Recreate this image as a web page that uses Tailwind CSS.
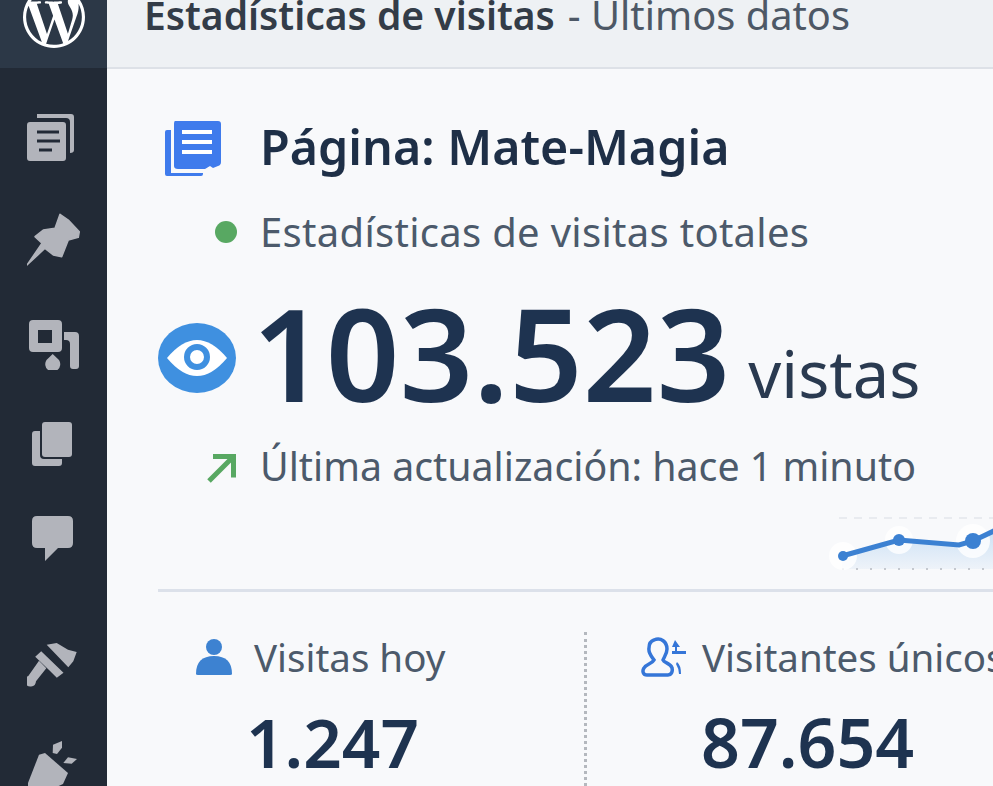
<!DOCTYPE html>
<html lang="es">
<head>
<meta charset="utf-8">
<script src="https://cdn.jsdelivr.net/npm/@tailwindcss/browser@4"></script>
</head>
<body class="w-[993px] h-[786px] overflow-hidden bg-[#f8f9fb] font-['Noto_Sans','Open_Sans',sans-serif]">
<div class="flex h-[786px] w-[993px] overflow-hidden">
  <aside class="w-[107px] shrink-0 bg-[#222a36] flex flex-col items-start overflow-hidden">
    <div class="w-full h-[68px] shrink-0 bg-[#2c3847] flex justify-center items-end pb-[20px]">
      <svg class="w-[62px] h-[62px] shrink-0" viewBox="0 0 24 24" fill="#fff"><path d="M21.469 6.825c.84 1.537 1.318 3.3 1.318 5.175 0 3.979-2.156 7.456-5.363 9.325l3.295-9.527c.615-1.54.82-2.771.82-3.864 0-.405-.026-.78-.07-1.11m-7.981.105c.647-.03 1.232-.105 1.232-.105.582-.075.514-.93-.067-.899 0 0-1.755.135-2.88.135-1.064 0-2.85-.15-2.85-.15-.585-.03-.661.855-.075.885 0 0 .54.061 1.125.09l1.68 4.605-2.37 7.08L5.354 6.9c.649-.03 1.234-.1 1.234-.1.585-.075.516-.93-.065-.896 0 0-1.746.138-2.874.138-.2 0-.438-.008-.69-.015C4.911 3.15 8.235 1.215 12 1.215c2.809 0 5.365 1.072 7.286 2.833-.046-.003-.091-.009-.141-.009-1.06 0-1.812.923-1.812 1.914 0 .89.513 1.643 1.06 2.531.411.72.89 1.643.89 2.977 0 .915-.354 1.994-.821 3.479l-1.075 3.585-3.9-11.61.001.014zM12 22.784c-1.059 0-2.081-.153-3.048-.437l3.237-9.406 3.315 9.087c.024.053.05.101.078.149-1.12.393-2.325.609-3.582.609M1.211 12c0-1.564.336-3.05.935-4.39L7.29 21.709C3.694 19.96 1.212 16.271 1.211 12M12 0C5.385 0 0 5.385 0 12s5.385 12 12 12 12-5.385 12-12S18.615 0 12 0"/></svg>
    </div>
    <svg class="w-[48px] h-[48px] mt-[46px] ml-[27px] shrink-0" viewBox="0 0 48 48" fill="#b2b4bb"><path d="M10 0H44q3 0 3 3V36q0 3-4 3V8q0-4-4-4H10z"/><path fill-rule="evenodd" d="M3 8H36q3 0 3 3V44q0 3-3 3H3q-3 0-3-3V11q0-3 3-3zM10 16.500v3H32v-3zM10 25.500v3H33v-3zM12 34.500v3H25v-3z"/></svg>
    <svg class="w-[56px] h-[56px] mt-[50px] ml-[27px] shrink-0" viewBox="0 0 56 56" fill="#b2b4bb"><path d="M0 53L15 31.300 8 24.700 16.300 18 28 16.300 33 2.300 41.300 8 52.300 19.700 51.300 25.300 41.300 28 34.700 44.700 26.300 43 18 36.300z" stroke="#b2b4bb" stroke-width="1.500" stroke-linejoin="round"/></svg>
    <svg class="w-[50px] h-[50px] mt-[52px] ml-[29px] shrink-0" viewBox="0 0 50 50" fill="#b2b4bb"><path fill-rule="evenodd" d="M4 0H29q4 0 4 4V28q0 4-4 4H4q-4 0-4-4V4q0-4 4-4zM9 10V23H23V10z"/><path d="M35 12H46q4 0 4 4V46q0 3-3 3H44q-3 0-3-3V24q0-4-4-4H35z"/><path d="M23.700 34L30 40A7.500 7.500 0 1 1 17.500 40z"/></svg>
    <svg class="w-[40px] h-[44px] mt-[52px] ml-[32px] shrink-0" viewBox="0 0 40 44" fill="#b2b4bb"><path d="M13 0H37q3 0 3 3V32q0 3-3 3H13q-3 0-3-3V3q0-3 3-3z"/><path d="M3 9H8V33q0 4 4 4H30v4q0 3-3 3H3q-3 0-3-3V12q0-3 3-3z"/></svg>
    <svg class="w-[41px] h-[46px] mt-[50px] ml-[32px] shrink-0" viewBox="0 0 41 46" fill="#b2b4bb"><path d="M5 0H36q5 0 5 5V27q0 5-5 5H26L13 45V32H5q-5 0-5-5V5q0-5 5-5z"/></svg>
    <svg class="w-[50px] h-[44px] mt-[81px] ml-[27px] shrink-0" viewBox="0 0 50 44" fill="#b2b4bb"><path d="M19.700 1.700L29.700 0 41 6.700 49.700 9 46.300 18.300 41.300 24.300z"/><path d="M8.200 13.800L14.200 8.200 36.500 29.800 29.800 34.800 21.500 26.500z"/><path d="M12 17.700L19.300 25.300 9 38.300A5.500 5.500 0 1 1 1.300 33z"/></svg>
    <svg class="w-[50px] h-[50px] mt-[54px] ml-[28px] shrink-0" viewBox="0 0 50 50" fill="#b2b4bb"><path d="M0 42L11 13.700 17 12 40 32 35 43 20 50H0z"/><path d="M24.700 12L25 3.700 34 0V6.700L29 13z"/><path d="M35.300 22L40 16.300 49 18 43.700 22.700z"/></svg>
  </aside>
  <main class="flex-1 min-w-0">
    <header class="h-[69px] bg-[#eef1f4] border-b-2 border-[#dde1e7] pl-[37px] overflow-hidden">
      <div class="flex items-baseline leading-[44px] -mt-[7px] whitespace-nowrap">
        <span class="text-[39px] font-semibold text-[#333c48]">Estadísticas de visitas</span>
        <span class="text-[39.800px] ml-[13px] text-[#4d5866]">- Últimos datos</span>
      </div>
    </header>
    <section class="pl-[51px]">
      <div class="flex items-center mt-[47px] h-[60px]">
        <svg class="w-[58px] h-[58px] shrink-0 ml-[5px] mt-[3px]" viewBox="0 0 58 58"><path d="M2 13q0-2 2-2h4v43h32v1q0 2-2 2H4q-2 0-2-2z" fill="#3f7bec"/><path d="M12 2h43q3 0 3 3v38q0 3-3 4l-5 2-3-2-5 3H15q-4 0-4-3V5q0-3 1-3z" fill="#3f7bec"/><path d="M19 11h30v4H19zM19 21h30v4H19zM19 31h30v4H19z" fill="#fff"/></svg>
        <h1 class="ml-[39px] text-[48.400px] leading-[60px] font-semibold text-[#1e2f47] whitespace-nowrap">Página: Mate-Magia</h1>
      </div>
      <div class="flex items-center mt-[34px] h-[44px]">
        <span class="w-[22px] h-[22px] rounded-full bg-[#58a862] ml-[57px] shrink-0"></span>
        <span class="ml-[23px] text-[40px] leading-[44px] tracking-[0.3px] text-[#4c5a6b] whitespace-nowrap">Estadísticas de visitas totales</span>
      </div>
      <div class="flex items-center mt-[33px] h-[130px]">
        <svg class="w-[78px] h-[70px] shrink-0 mt-[11px]" viewBox="0 0 78 70"><ellipse cx="39" cy="35" rx="39" ry="35" fill="#3f90e0"/><path d="M9 35Q24 17 39 17T69 35Q54 53 39 53T9 35z" fill="#fff"/><circle cx="39" cy="34" r="10" fill="none" stroke="#3f90e0" stroke-width="6"/></svg>
        <span class="ml-[16px] text-[129px] leading-[130px] font-semibold text-[#1e3350] whitespace-nowrap">103.523</span>
        <span class="ml-[18px] mt-[42px] text-[65px] leading-[70px] text-[#2a3a50] whitespace-nowrap">vistas</span>
      </div>
      <div class="flex items-center mt-[27px] h-[44px]">
        <svg class="w-[30px] h-[30px] ml-[49px] mt-[3px] shrink-0" viewBox="0 0 30 30"><path d="M2 28L25 5M6 3.500h20.500v21" fill="none" stroke="#58a862" stroke-width="5"/></svg>
        <span class="ml-[23px] text-[39.300px] leading-[44px] text-[#4c5a6b] whitespace-nowrap">Última actualización: hace 1 minuto</span>
      </div>
      <div class="relative h-[74px] mt-[5px] ml-[669px]">
        <svg class="absolute left-0 top-0 w-[170px] h-[74px] overflow-visible" viewBox="0 0 170 74">
          <defs><linearGradient id="fill-area" x1="0" y1="0" x2="0" y2="1"><stop offset="0" stop-color="#c9dff5"/><stop offset="1" stop-color="#eef3f9"/></linearGradient></defs>
          <path d="M12 25H170" stroke="#d9dde4" stroke-dasharray="8 7" fill="none"/>
          <path d="M15 63L72 47 132 52 173 34V76H15z" fill="url(#fill-area)"/>
          <path d="M15 76H173" stroke="#c4c8cf" stroke-width="2" stroke-dasharray="2 12" fill="none"/>
          <circle cx="16" cy="63" r="14" fill="#fff" opacity=".8"/><circle cx="72" cy="47" r="14" fill="#fff" opacity=".8"/><circle cx="146" cy="48" r="17" fill="#fff" opacity=".8"/>
          <path d="M15 63L72 47 132 52 146 48 173 35" stroke="#3c81d2" stroke-width="5" fill="none"/>
          <circle cx="16" cy="63" r="5" fill="#3c81d2"/><circle cx="72" cy="47" r="6" fill="#3c81d2"/><circle cx="146" cy="48" r="8" fill="#3c81d2"/>
        </svg>
      </div>
      <div class="h-[3px] bg-[#dce1ea] mt-[22px]"></div>
      <div class="flex mt-[40px]">
        <div class="w-[429px] shrink-0 border-r-[3px] border-dotted border-[#b4b8be] h-[160px]">
          <div class="flex items-center h-[50px] pl-[37px]">
            <svg class="w-[38px] h-[38px] shrink-0" viewBox="0 0 38 38" fill="#3d82d1"><circle cx="19" cy="9" r="8"/><path d="M1 36q0-18 18-18t18 18q0 1-2 1H3q-2 0-2-1z"/></svg>
            <span class="ml-[21px] text-[38.500px] leading-[44px] text-[#4c5a6b] whitespace-nowrap">Visitas hoy</span>
          </div>
          <div class="text-[67.500px] leading-[76px] font-semibold text-[#1e3350] pl-[88px] mt-[22px]">1.247</div>
        </div>
        <div class="flex-1 min-w-0">
          <div class="flex items-center h-[50px] pl-[54px] whitespace-nowrap">
            <svg class="w-[46px] h-[40px] shrink-0" viewBox="0 0 46 40"><path d="M13 3c7-3 13 2 13 9 0 5-3 8-4 11 1 3 8 3 9 8 1 4-1 7-4 7H6c-4 0-5-4-3-7 2-4 8-4 10-8-2-3-6-7-5-12 0-4 2-7 5-8z" fill="none" stroke="#3576d8" stroke-width="3.500"/><path d="M34 3l5 7h-3v4h9v3H31v-3h3v-4h-3z" fill="#3576d8"/><path d="M36 25q4 3 4 12h-2q0-5-3-10z" fill="#3576d8"/></svg>
            <span class="ml-[15px] text-[38.500px] leading-[44px] text-[#4c5a6b]">Visitantes únicos</span>
          </div>
          <div class="text-[68px] leading-[76px] font-semibold text-[#1e3350] pl-[114px] mt-[22px]">87.654</div>
        </div>
      </div>
    </section>
  </main>
</div>
</body>
</html>
